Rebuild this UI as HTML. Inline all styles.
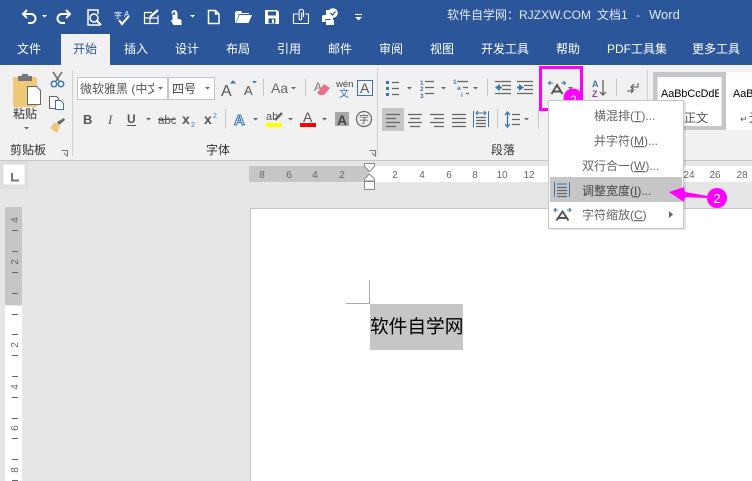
<!DOCTYPE html>
<html lang="zh"><head><meta charset="utf-8"><title>Word</title>
<style>
html,body{margin:0;padding:0;width:752px;height:481px;overflow:hidden;background:#e6e6e6}
svg{display:block;overflow:hidden}
text{font-family:"Liberation Sans","Noto Sans CJK SC",sans-serif;font-size:12px;fill:#444}
.w{fill:#fff}
.n{font-size:10px;fill:#666;text-anchor:middle}
.m{fill:#666}
.st{fill:none;stroke:#fff;stroke-width:1.5}
.l{stroke:#666;stroke-width:1.2;fill:none}
.b{fill:#4a7fb5}
.s{stroke:#c6c6c6;stroke-width:1}
.t{stroke:#666;stroke-width:1}
</style></head><body>
<svg width="752" height="481" viewBox="0 0 752 481" xmlns="http://www.w3.org/2000/svg">
<defs>
<path id="d" d="M0 0h5l-2.500 2.500z" fill="#666"/>
<path id="dw" d="M0 0h5l-2.500 2.500z" fill="#fff"/>
</defs>
<rect width="752" height="481" fill="#e6e6e6"/>
<rect width="752" height="65" fill="#2b579a"/>
<rect y="65" width="752" height="95" fill="#f1f1f1"/>
<rect y="160" width="752" height="1" fill="#c6c6c6"/>
<rect x="61" y="34" width="49" height="31" fill="#f1f1f1"/>

<!-- QAT -->
<path class="st" style="stroke-width:2" d="M27 10l-4 4 4 4M23 14h8a4.500 4.500 0 0 1 0 9h-3"/>
<use href="#dw" x="42" y="15"/>
<path class="st" style="stroke-width:2" d="M66 10l4 4-4 4M70 14h-8a4.500 4.500 0 0 0 0 9h3"/>
<path class="st" d="M98 14v-4h-10v15h12"/><circle class="st" cx="94" cy="18" r="4"/><path class="st" style="stroke-width:2" d="M97 21l4 4"/>
<text x="114" y="18" class="w" style="font-size:8px">字</text><text x="124" y="17" class="w" style="font-size:8px">A</text>
<path class="st" style="stroke-width:2" d="M119 20l3 4 7-8"/>
<path class="st" style="stroke-width:1.200" d="M152 12.500h-7.500v11h13.500v-8M144.500 18h13.500M150 18v5.500"/><path class="st" style="stroke-width:2.200" d="M150 17l8-7"/>
<path fill="#fff" d="M174 10a3.500 3.500 0 0 1 3.500 3.500v5l4 1.500v5h-8l-3-5 2 .5v-6.500a3.500 3.500 0 0 1-1-.5 3.500 3.500 0 0 1 2.500-3.500z"/><circle cx="174" cy="13.500" r="1.300" fill="#2b579a"/>
<use href="#dw" x="190" y="15"/>
<path class="st" d="M208.500 10.500h7l3.500 3.500v9.500h-10.500zM215.500 10.500v3.500h3.500"/>
<path fill="#fff" d="M235 23V13l1-2h5l1 2h7v1h-10l-3 8zm1 0l3.500-8H252l-3.500 8z"/>
<path fill="#fff" d="M265 10h12l2 2v12h-14zm3 1.500v4h8v-4zm.5 7v5h7v-5z"/><rect x="272" y="19.500" width="2" height="3.500" fill="#fff"/>
<path class="st" style="stroke-width:1.100" d="M298 14h-4.500v9.500h15V14H305"/><path class="st" style="stroke-width:1.100" d="M303.500 17v-5.500a2.200 2.200 0 0 0-4.400 0v7a1.300 1.300 0 0 0 2.600 0v-6"/>
<path fill="#fff" d="M323 15h10v7h-2.500v-3h-5v3H322v-6zM326 20h8v5h-8z"/><rect x="326" y="10" width="6" height="5" fill="#fff"/>
<circle cx="333" cy="13" r="4.800" fill="#fff"/><path d="M330.500 13l2 2 3-3.500" fill="none" stroke="#2b579a" stroke-width="1.300"/>
<rect x="355" y="14" width="7" height="1" fill="#fff"/><path fill="#fff" d="M355 17h7l-3.500 3.500z"/>

<!-- title -->
<text x="447" y="19" style="fill:#dfe6f0">软件自学网：</text>
<text x="519" y="19" style="font-size:12px;fill:#dfe6f0">RJZXW.COM</text>
<text x="597" y="19" style="fill:#dfe6f0">文档1</text>
<text x="636" y="19" style="fill:#dfe6f0">-</text>
<text x="649" y="19" style="font-size:13px;fill:#dfe6f0">Word</text>

<!-- tabs -->
<text x="17" y="53" class="w">文件</text>
<text x="73" y="53" style="fill:#2b579a">开始</text>
<text x="124" y="53" class="w">插入</text>
<text x="175" y="53" class="w">设计</text>
<text x="226" y="53" class="w">布局</text>
<text x="277" y="53" class="w">引用</text>
<text x="328" y="53" class="w">邮件</text>
<text x="379" y="53" class="w">审阅</text>
<text x="430" y="53" class="w">视图</text>
<text x="481" y="53" class="w">开发工具</text>
<text x="556" y="53" class="w">帮助</text>
<text x="607" y="53" class="w">PDF工具集</text>
<text x="692" y="53" class="w">更多工具</text>

<!-- clipboard -->
<rect x="13" y="77" width="24" height="30" rx="1" fill="#efc87a"/>
<rect x="18" y="76" width="14" height="5" fill="#777"/><rect x="22" y="74" width="6" height="3" fill="#777"/>
<path d="M27.500 86.500h9l4 4v14h-13z" fill="#fff" stroke="#666"/>
<text x="13" y="118" style="fill:#333">粘贴</text>
<use href="#d" x="24" y="127"/>
<path d="M53 72l6 9M62 72l-6 9" stroke="#666" stroke-width="1.500" fill="none"/>
<circle cx="54" cy="84" r="2.700" fill="none" stroke="#3a75b0" stroke-width="1.500"/><circle cx="61" cy="84" r="2.700" fill="none" stroke="#3a75b0" stroke-width="1.500"/>
<path d="M49.500 96.500h7l2 2v10h-9z" fill="#fff" stroke="#666"/><path d="M55.500 100.500h5l3 3v6h-8z" fill="#fff" stroke="#3a75b0"/>
<path d="M50 128l5-6 5 4-3 7z" fill="#efc87a"/><path d="M57 122l7-4 1 2-6 5z" fill="#666"/>
<text x="10" y="154" style="fill:#333">剪贴板</text>
<path d="M61.500 150.500h6v6M64 153l3 3" stroke="#777" fill="none"/>
<rect x="72" y="70" width="1" height="86" fill="#d0d0d0"/>

<!-- font -->
<rect x="77.500" y="77.500" width="90" height="22" fill="#fff" stroke="#c6c6c6"/>
<rect x="168.500" y="77.500" width="46" height="22" fill="#fff" stroke="#c6c6c6"/>
<svg x="80" y="80" width="74" height="18"><text x="0" y="13" style="fill:#555">微软雅黑 (中文</text></svg>
<use href="#d" x="158" y="87"/>
<text x="172" y="93" style="fill:#444">四号</text>
<use href="#d" x="205" y="87"/>
<text x="221" y="96" style="font-size:16px;fill:#555">A</text><path d="M231 83l2-2 2 2z" fill="#3a75b0" stroke="#3a75b0"/>
<text x="244" y="95" style="font-size:13px;fill:#555">A</text><path d="M252 81h5l-2.500 2.500z" fill="#3a75b0"/>
<rect x="263" y="78" width="1" height="18" fill="#c6c6c6"/>
<text x="271" y="93" style="font-size:14px;fill:#666">Aa</text>
<use href="#d" x="291" y="87"/>
<rect x="305" y="78" width="1" height="18" fill="#c6c6c6"/>
<text x="314" y="91" style="font-size:12px;fill:#777">A</text><path d="M317 93l7-9 6 4-6 7h-4z" fill="#e8728a"/>
<text x="336" y="87" style="font-size:9.500px;fill:#444">wén</text><text x="339" y="97" style="font-size:10px;fill:#3a75b0">文</text>
<rect x="357.500" y="80.500" width="15" height="15" fill="none" stroke="#3a75b0"/><text x="360" y="93" style="font-size:14px;fill:#555">A</text>

<text x="83" y="124" style="font-weight:bold;font-size:13px;fill:#555">B</text>
<text x="108" y="124" style="font-style:italic;font-family:'Liberation Serif',serif;font-size:13px;fill:#555">I</text>
<text x="127" y="123" style="font-weight:bold;fill:#555">U</text><rect x="127" y="125" width="9" height="1" fill="#555"/>
<use href="#d" x="146" y="118"/>
<text x="158" y="124" style="font-size:11.500px;fill:#555">abc</text><rect x="158" y="119" width="17" height="1" fill="#555"/>
<text x="182" y="124" style="font-weight:bold;font-size:14px;fill:#555">x</text><text x="191" y="127" style="font-size:7px;fill:#3a75b0">2</text>
<text x="204" y="124" style="font-weight:bold;font-size:14px;fill:#555">x</text><text x="213" y="118" style="font-size:7px;fill:#3a75b0">2</text>
<rect x="225" y="109" width="1" height="20" fill="#c6c6c6"/>
<text x="234" y="125" style="font-size:15px;font-weight:bold;fill:#e2ecf7;stroke:#3a75b0;stroke-width:1">A</text>
<use href="#d" x="253" y="118"/>
<text x="266" y="120" style="font-size:11px;fill:#555">ab</text><path d="M275 120l7-7" stroke="#666" stroke-width="2.500"/><rect x="266" y="123" width="16" height="4" fill="#ff0"/>
<use href="#d" x="288" y="118"/>
<text x="303" y="122" style="font-size:14px;fill:#555">A</text><rect x="300" y="123" width="16" height="4" fill="#f00"/>
<use href="#d" x="322" y="118"/>
<rect x="335" y="112" width="14" height="14" fill="#a8a8a8"/><text x="337" y="125" style="font-size:14px;fill:#444;font-weight:bold">A</text>
<circle cx="364" cy="119" r="7.500" fill="none" stroke="#666" stroke-width="1.200"/><text x="359" y="123" style="font-size:10px;fill:#555">字</text>
<text x="206" y="154" style="fill:#333">字体</text>
<path d="M369.500 150.500h6v6M372 153l3 3" stroke="#777" fill="none"/>
<rect x="377" y="68" width="1" height="88" fill="#d0d0d0"/>

<!-- paragraph row 1 -->
<g fill="#3a75b0"><rect x="386" y="81" width="3" height="3"/><rect x="386" y="87" width="3" height="3"/><rect x="386" y="93" width="3" height="3"/></g>
<path class="l" d="M392 82.500h7M392 88.500h7M392 94.500h7"/>
<use href="#d" x="407" y="87"/>
<text x="420" y="85" style="font-size:6.500px;fill:#3a75b0;font-weight:bold">1</text><text x="420" y="91" style="font-size:6.500px;fill:#3a75b0;font-weight:bold">2</text><text x="420" y="98" style="font-size:6.500px;fill:#3a75b0;font-weight:bold">3</text>
<path class="l" d="M425 81.500h9M425 87.500h9M425 93.500h9"/>
<use href="#d" x="441" y="87"/>
<text x="453" y="84" style="font-size:6.500px;fill:#3a75b0;font-weight:bold">1</text><text x="457" y="90" style="font-size:6.500px;fill:#3a75b0;font-weight:bold">a</text><text x="461" y="97" style="font-size:6.500px;fill:#3a75b0;font-weight:bold">i</text>
<path class="l" d="M457 81.500h11M463 87.500h5M466 93.500h3"/>
<use href="#d" x="473" y="87"/>
<rect x="487" y="78" width="1" height="18" fill="#c6c6c6"/>
<path class="l" d="M495 81.500h16M502 85.500h9M502 89.500h9M495 93.500h16"/><path d="M495 87.500l5-3.500v7z" fill="#3a75b0"/><rect x="498" y="86.500" width="4" height="2" fill="#3a75b0"/>
<path class="l" d="M517 81.500h16M524 85.500h9M524 89.500h9M517 93.500h16"/><path d="M524 87.500l-5-3.500v7z" fill="#3a75b0"/><rect x="517" y="86.500" width="3" height="2" fill="#3a75b0"/>

<!-- paragraph row 2 -->
<rect x="382" y="108" width="22" height="23" fill="#c6c6c6"/>
<path class="l" d="M386 114.500h14M386 118.500h10M386 122.500h14M386 126.500h10"/>
<path class="l" d="M408 114.500h14M410 118.500h10M408 122.500h14M410 126.500h10"/>
<path class="l" d="M430 114.500h14M434 118.500h10M430 122.500h14M434 126.500h10"/>
<path class="l" d="M452 114.500h14M452 118.500h14M452 122.500h14M452 126.500h14"/>
<path d="M473.500 111v16M488.500 111v16" stroke="#3a75b0" fill="none"/><path d="M476 113h10M478 111l-2 2 2 2M484 111l2 2-2 2" stroke="#3a75b0" fill="none"/>
<path class="l" d="M476 117.500h10M476 120.500h10M476 123.500h10M476 126.500h10"/>
<rect x="497" y="109" width="1" height="20" fill="#c6c6c6"/>
<path d="M507.500 113v13M505 115l2.500-3 2.500 3M505 124l2.500 3 2.500-3" stroke="#3a75b0" stroke-width="1.300" fill="none"/>
<path class="l" d="M512 114.500h8M512 119.500h8M512 124.500h8"/>
<use href="#d" x="524" y="118"/>
<rect x="538" y="109" width="1" height="20" fill="#c6c6c6"/>
<text x="491" y="154" style="fill:#333">段落</text>

<!-- A scale + sort + show -->
<path d="M551.500 94l5.500-9 5.500 9M553.500 91.500h7" stroke="#555" stroke-width="2" fill="none"/>
<path d="M548.500 83h4.500M550.500 81l-2 2 2 2M565.500 83h-4.500M563.500 81l2 2-2 2" stroke="#3a75b0" fill="none"/>
<use href="#d" x="568" y="87"/>
<text x="592" y="87" style="font-size:9px;fill:#3a75b0;font-weight:bold">A</text><text x="592" y="97" style="font-size:9px;fill:#8d3fa8;font-weight:bold">Z</text>
<path d="M603 80v15M600 92l3 3 3-3" stroke="#555" fill="none" stroke-width="1.200"/>
<rect x="616" y="78" width="1" height="18" fill="#c6c6c6"/>
<path d="M638 83v4h-7M634 84l-3 3 3 3" stroke="#555" fill="none"/><path d="M627 91h6M631 89l2 2-2 2" stroke="#555" fill="none"/>
<rect x="647" y="70" width="1" height="86" fill="#d0d0d0"/>

<!-- styles -->
<rect x="653" y="72" width="73" height="58" fill="#c6c6c6"/>
<rect x="657.500" y="77" width="64" height="49" fill="#fff"/>
<rect x="726" y="72" width="26" height="58" fill="#fff"/>
<svg x="660" y="84" width="59" height="18"><text x="1" y="13" style="fill:#000;font-size:10.800px">AaBbCcDdE</text></svg>
<svg x="732" y="84" width="20" height="18"><text x="1" y="13" style="fill:#000;font-size:10.800px">AaB</text></svg>
<text x="684" y="122" style="fill:#555">正文</text>
<text x="740" y="122" style="fill:#555;font-size:9px">↵</text>
<text x="749" y="122" style="fill:#555">无</text>

<!-- horizontal ruler -->
<rect x="249" y="166" width="120" height="16" fill="#c6c6c6"/>
<rect x="369" y="166" width="383" height="16" fill="#fff"/>
<text x="262" y="178" class="n">8</text><text x="289" y="178" class="n">6</text><text x="315" y="178" class="n">4</text><text x="342" y="178" class="n">2</text>
<text x="395" y="178" class="n">2</text><text x="422" y="178" class="n">4</text><text x="449" y="178" class="n">6</text><text x="475" y="178" class="n">8</text><text x="502" y="178" class="n">10</text><text x="529" y="178" class="n">12</text>
<text x="689" y="178" class="n">24</text><text x="715" y="178" class="n">26</text><text x="742" y="178" class="n">28</text>
<path d="M364.500 163.500h10v3l-5 5-5-5zM369.500 174l5 5v2h-10v-2zM364.500 181.500h10v8h-10z" fill="#fff" stroke="#8a8a8a"/>

<!-- L tab -->
<rect x="0" y="161" width="28" height="28" fill="#dedede"/>
<rect x="3.500" y="164.500" width="21" height="20" fill="#fff" stroke="#eee"/>
<path d="M12 173v7.500h7" stroke="#777" stroke-width="2" fill="none"/>

<!-- vertical ruler -->
<rect x="5" y="207" width="17" height="98" fill="#c6c6c6"/>
<rect x="5" y="306" width="17" height="175" fill="#fff"/>
<path class="t" d="M12 230.500h6M12 251.500h6M12 272.500h6M12 293.500h6M12 314.500h6M12 334.500h6M12 355.500h6M12 376.500h6M12 397.500h6M12 418.500h6M12 438.500h6M12 459.500h6"/>
<rect x="12" y="480" width="6" height="1" fill="#666"/>
<text transform="translate(18 220) rotate(-90)" class="n">4</text>
<text transform="translate(18 262) rotate(-90)" class="n">2</text>
<text transform="translate(18 345) rotate(-90)" class="n">2</text>
<text transform="translate(18 387) rotate(-90)" class="n">4</text>
<text transform="translate(18 428) rotate(-90)" class="n">6</text>
<text transform="translate(18 470) rotate(-90)" class="n">8</text>

<!-- page -->
<rect x="250" y="208" width="502" height="273" fill="#c6c6c6"/>
<rect x="251" y="209" width="501" height="272" fill="#fff"/>
<path d="M346 303.500h23.500V280" fill="none" stroke="#a8a8a8"/>
<rect x="370" y="304" width="93" height="46" fill="#c6c6c6"/>
<text x="370" y="333" style="font-size:18.700px;fill:#000">软件自学网</text>

<!-- magenta box and badge -->
<circle cx="573" cy="98" r="9.500" fill="#f0f"/>
<text x="570" y="104" class="w">2</text>
<rect x="540.500" y="67.500" width="41" height="42" fill="none" stroke="#f0f" stroke-width="3"/>

<!-- menu -->
<rect x="550" y="102" width="136" height="128" fill="#000" opacity=".1"/>
<rect x="548.500" y="100.500" width="135" height="128" fill="#fff" stroke="#c6c6c6"/>
<rect x="550" y="177" width="132" height="25" fill="#c6c6c6"/>
<text x="594" y="120" class="m">横混排(<tspan text-decoration="underline">T</tspan>)...</text>
<text x="594" y="145" class="m">并字符(<tspan text-decoration="underline">M</tspan>)...</text>
<text x="582" y="170" class="m">双行合一(<tspan text-decoration="underline">W</tspan>)...</text>
<text x="582" y="195" style="fill:#444">调整宽度(<tspan text-decoration="underline">I</tspan>)...</text>
<text x="582" y="219" class="m">字符缩放(<tspan text-decoration="underline">C</tspan>)</text>
<path d="M669 211l4 3.500-4 3.500z" fill="#666"/>
<path d="M554.500 182v15M569.500 182v15" stroke="#3a75b0" fill="none"/>
<path d="M557 184h10" stroke="#3a75b0"/>
<path class="l" d="M557 187.500h10M557 190.500h10M557 193.500h10M557 196.500h10"/>
<path d="M556.500 220.500l6-9 6 9M558.500 218h8" stroke="#555" stroke-width="2" fill="none"/>
<path d="M554 210h4M556 208l-2 2 2 2M571 210h-4M569 208l2 2-2 2" stroke="#3a75b0" fill="none"/>

<!-- annotation -->
<path d="M669 192l15-5 1 5 23 4v2l-23-1-1 5z" fill="#f0f"/>
<circle cx="717" cy="198" r="10" fill="#f0f"/>
<text x="713.500" y="203" class="w" style="font-size:13px">2</text>
</svg>
</body></html>
